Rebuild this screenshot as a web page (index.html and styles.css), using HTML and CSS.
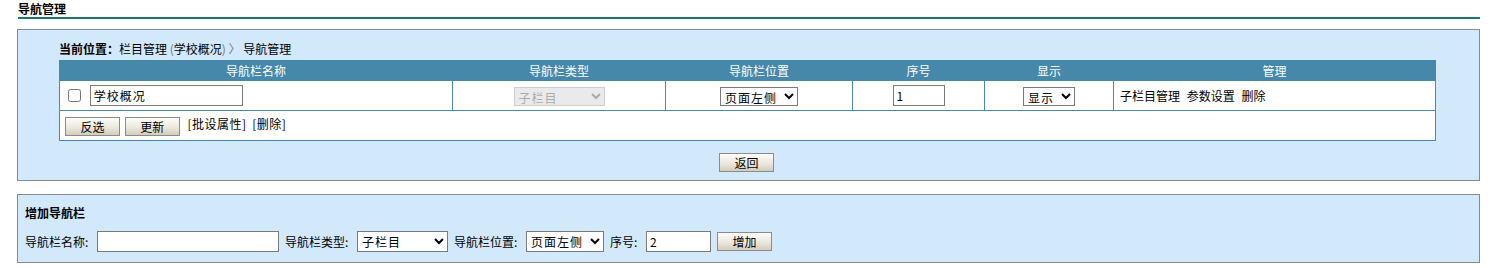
FILE: index.html
```html
<!DOCTYPE html>
<html lang="zh-CN">

<head>
    <meta charset="UTF-8">
    <title>导航管理</title>
    <link rel="stylesheet" href="styles.css">
</head>

<body>
    <div class="page-title">导航管理</div>

    <div class="box main-box">
        <div class="location">
            <b>当前位置：</b>栏目管理 <span class="dim">(</span>学校概况<span class="dim">) 〉</span> 导航管理
        </div>

        <table class="nav-table">
            <tr class="head">
                <th class="col-name">导航栏名称</th>
                <th class="col-type">导航栏类型</th>
                <th class="col-pos">导航栏位置</th>
                <th class="col-order">序号</th>
                <th class="col-show">显示</th>
                <th class="col-manage">管理</th>
            </tr>
            <tr class="item">
                <td class="cell-left">
                    <input type="checkbox" class="check">
                    <input type="text" class="txt name-input" value="学校概况">
                </td>
                <td>
                    <select class="sel sel-type" disabled>
                        <option>子栏目</option>
                    </select>
                </td>
                <td>
                    <select class="sel sel-pos">
                        <option>页面左侧</option>
                    </select>
                </td>
                <td><input type="text" class="txt order-input" value="1"></td>
                <td>
                    <select class="sel sel-show">
                        <option>显示</option>
                    </select>
                </td>
                <td class="cell-left manage">
                    <a href="javascript:void(0);">子栏目管理</a>
                    <a href="javascript:void(0);">参数设置</a>
                    <a href="javascript:void(0);">删除</a>
                </td>
            </tr>
            <tr class="actions">
                <td colspan="6">
                    <button class="btn">反选</button>
                    <button class="btn">更新</button>
                    <a href="javascript:void(0);" class="bracket">[批设属性]</a>
                    <a href="javascript:void(0);" class="bracket">[删除]</a>
                </td>
            </tr>
        </table>

        <div class="back-row">
            <button class="btn">返回</button>
        </div>
    </div>

    <div class="box add-box">
        <div class="add-title">增加导航栏</div>
        <div class="add-form">
            <label class="lbl-long">导航栏名称:</label>
            <input type="text" class="txt add-name">
            <label class="lbl-long">导航栏类型:</label>
            <select class="sel add-type">
                <option>子栏目</option>
            </select>
            <label class="lbl-long">导航栏位置:</label>
            <select class="sel add-pos">
                <option>页面左侧</option>
            </select>
            <label class="lbl-short">序号:</label>
            <input type="text" class="txt add-order" value="2">
            <button class="btn">增加</button>
        </div>
    </div>
</body>

</html>
```

FILE: styles.css
```css
* {
    box-sizing: border-box;
}

body {
    margin: 0;
    font-family: "Noto Sans CJK SC", "Liberation Sans", sans-serif;
    font-size: 12px;
    color: #000;
    background: #fff;
}

a {
    color: #000;
    text-decoration: none;
}

.page-title {
    margin-left: 18px;
    width: 1462px;
    height: 19px;
    line-height: 17px;
    font-weight: bold;
    border-bottom: 2px solid #1b7a5a;
}

.box {
    margin-left: 17px;
    width: 1463px;
    background: #d2e8fb;
    border: 1px solid #868a8e;
}

.main-box {
    margin-top: 10px;
    height: 152px;
    padding: 8px 43px 0 41px;
}

.location {
    height: 22px;
    line-height: 21px;
}

.location b {
    font-weight: bold;
}

.location .dim {
    color: #777;
}

.nav-table {
    width: 100%;
    border-collapse: collapse;
    background: #fff;
}

.nav-table th,
.nav-table td {
    border: 1px solid #4a8aad;
    padding: 0;
    text-align: center;
    font-weight: normal;
}

.nav-table .head th {
    height: 20px;
    background: #4588aa;
    color: #fff;
    border-color: #4588aa;
}

.col-name { width: 393px; }
.col-type { width: 213px; }
.col-pos { width: 187px; }
.col-order { width: 132px; }
.col-show { width: 129px; }

.nav-table .item td {
    height: 30px;
}

.nav-table .cell-left {
    text-align: left;
    padding-left: 6px;
}

.check {
    margin: 0 6px 0 2px;
    width: 13px;
    height: 13px;
    vertical-align: middle;
}

.txt {
    height: 21px;
    border: 1px solid #7a7a7a;
    font-family: inherit;
    font-size: 12px;
    padding: 0 3px;
    vertical-align: middle;
    background: #fff;
}

.name-input {
    width: 153px;
    letter-spacing: 1px;
}

.order-input {
    width: 52px;
}

.sel {
    height: 19px;
    border: 1px solid #7a7a7a;
    font-family: inherit;
    font-size: 12px;
    vertical-align: middle;
    background: #fff;
    color: #000;
    padding: 0;
    letter-spacing: 1px;
}

.sel-type {
    width: 91px;
    background: #e2e2e2;
    color: #888;
    border-color: #b8b8b8;
}

.sel-pos {
    width: 78px;
}

.sel-show {
    width: 52px;
}

.manage a {
    margin-right: 4px;
}

.nav-table .actions td {
    height: 30px;
    text-align: left;
    padding-left: 5px;
}

.btn {
    width: 55px;
    height: 19px;
    padding: 0;
    border: 1px solid #8b8b8b;
    background: linear-gradient(#fdfcf9, #ece8de 55%, #d3ccbb);
    font-family: inherit;
    font-size: 12px;
    color: #000;
    vertical-align: middle;
    margin-right: 2px;
}

.bracket {
    margin-left: 3px;
    letter-spacing: 0.5px;
}

.back-row {
    text-align: center;
    padding-top: 11px;
}

.add-box {
    margin-top: 13px;
    height: 69px;
    padding: 8px 7px 0 7px;
}

.add-title {
    font-weight: bold;
    height: 20px;
    line-height: 20px;
}

.add-form {
    margin-top: 8px;
    display: flex;
    align-items: center;
    gap: 6px;
}

.lbl-long {
    width: 66px;
}

.lbl-short {
    width: 30px;
}

.add-name {
    width: 182px;
}

.add-type {
    width: 91px;
    height: 21px;
}

.add-pos {
    width: 78px;
    height: 21px;
}

.add-order {
    width: 65px;
}

.add-form .btn {
    width: 55px;
}
```
